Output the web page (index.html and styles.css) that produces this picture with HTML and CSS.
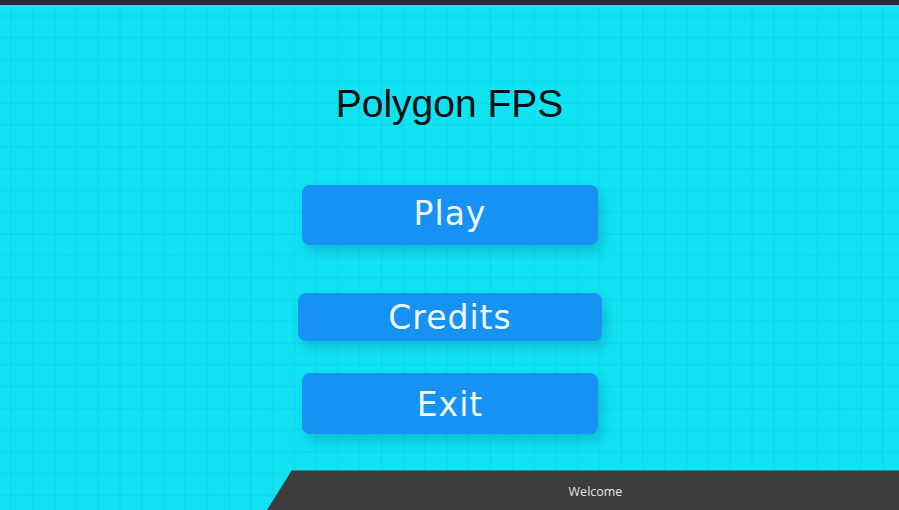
FILE: index.html
```html
<!DOCTYPE html>
<html>
<head>
<meta charset="utf-8">
<link rel="stylesheet" href="styles.css">
</head>
<body>
<div class="screen">
  <div class="topbar"></div>
  <main class="menu">
    <h1 class="title">Polygon FPS</h1>
    <button class="btn btn-play"><span class="btn-label label-up">Play</span></button>
    <button class="btn btn-credits"><span class="btn-label">Credits</span></button>
    <button class="btn btn-exit"><span class="btn-label label-down">Exit</span></button>
  </main>
  <footer class="status">
    <span class="status-text">Welcome</span>
  </footer>
</div>
</body>
</html>
```
FILE: styles.css
```css
html, body {
  margin: 0;
  padding: 0;
  height: 100%;
  overflow: hidden;
}
body {
  background-color: #10e3f1;
  background-image:
    linear-gradient(to right, rgba(0, 150, 190, 0.075) 1.5px, transparent 1.5px),
    linear-gradient(to bottom, rgba(0, 150, 190, 0.075) 1.5px, transparent 1.5px);
  background-size: 21.8px 21.8px;
  background-position: 10px 15px;
}
.screen {
  height: 510px;
  display: flex;
  flex-direction: column;
}
.topbar {
  height: 5px;
  background: #2b2b33;
  flex: none;
}
.menu {
  flex: 1;
  display: flex;
  flex-direction: column;
  align-items: center;
}
.title {
  margin: 77px 0 0 0;
  font-family: "Liberation Sans", Arial, sans-serif;
  font-weight: normal;
  font-size: 39px;
  line-height: 44px;
  color: #050f12;
}
.btn {
  border: none;
  border-radius: 8px;
  background: #1592f4;
  color: #f2f8ff;
  font-family: "DejaVu Sans", "Open Sans", sans-serif;
  font-size: 33px;
  padding: 0;
  box-shadow: 4px 7px 12px rgba(0, 60, 100, 0.22);
  display: flex;
  align-items: center;
  justify-content: center;
}
.btn-label {
  letter-spacing: 1px;
  margin-right: -1px;
}
.label-up {
  transform: translateY(-2px);
}
.label-down {
  transform: translateY(1px);
}
.btn-play {
  width: 296px;
  height: 60px;
  margin-top: 59px;
}
.btn-credits {
  width: 304px;
  height: 48px;
  margin-top: 48px;
}
.btn-exit {
  width: 296px;
  height: 61px;
  margin-top: 32px;
}
.status {
  flex: none;
  height: 40px;
  background: #3c3c3c;
  clip-path: polygon(292px 0, 100% 0, 100% 100%, 267px 100%);
  box-sizing: border-box;
  padding-left: 292px;
  display: flex;
  align-items: center;
  justify-content: center;
  border-top: 1px solid #2a8a90;
}
.status-text {
  font-family: "Open Sans", "Noto Sans", sans-serif;
  font-size: 12.5px;
  color: #e6e6e6;
  transform: translateY(1px);
}
```
